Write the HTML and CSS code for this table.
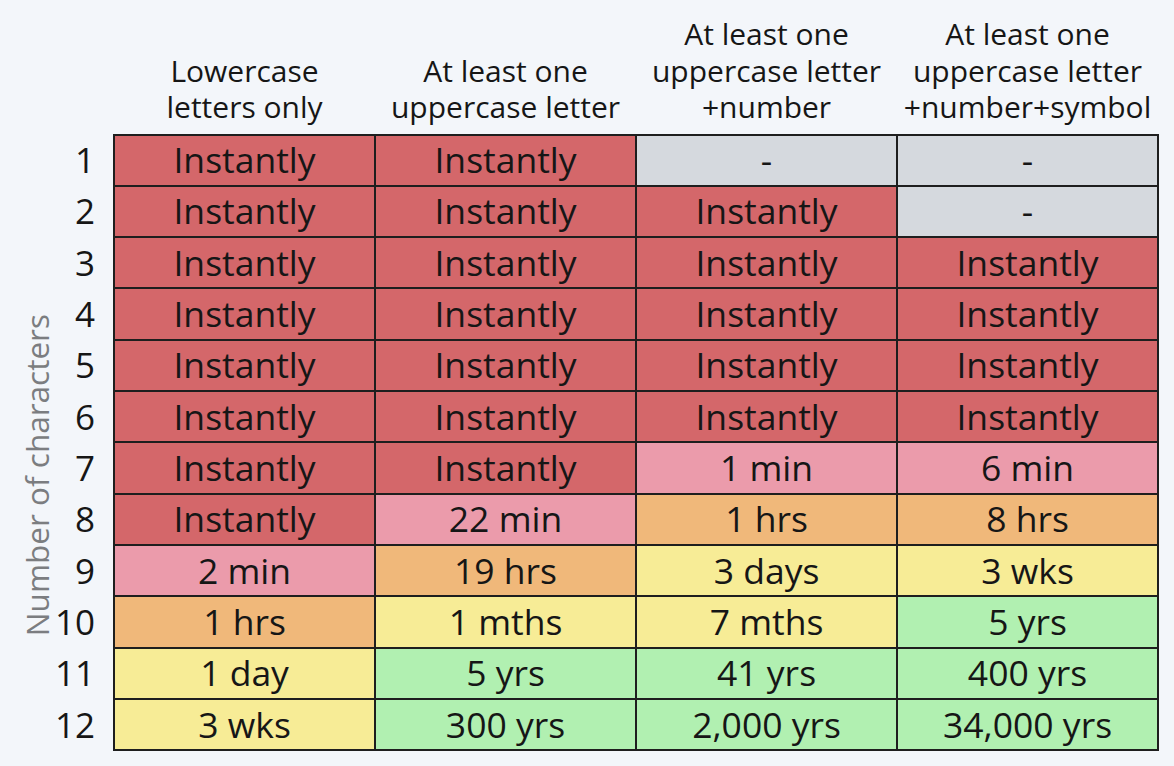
FILE: index.html
```html
<!DOCTYPE html>
<html>
<head>
<meta charset="utf-8">
<link rel="stylesheet" href="styles.css">
</head>
<body>
<div class="chart">
  <div class="axis"><span class="axis-text">Number of characters</span></div>
  <table class="grid">
    <thead>
      <tr>
        <th class="corner"></th>
        <th class="colhead">Lowercase<br>letters only</th>
        <th class="colhead">At least one<br>uppercase letter</th>
        <th class="colhead">At least one<br>uppercase letter<br>+number</th>
        <th class="colhead">At least one<br>uppercase letter<br>+number+symbol</th>
      </tr>
    </thead>
    <tbody>
      <tr><th class="num">1</th><td class="red">Instantly</td><td class="red">Instantly</td><td class="gray">-</td><td class="gray">-</td></tr>
      <tr><th class="num">2</th><td class="red">Instantly</td><td class="red">Instantly</td><td class="red">Instantly</td><td class="gray">-</td></tr>
      <tr><th class="num">3</th><td class="red">Instantly</td><td class="red">Instantly</td><td class="red">Instantly</td><td class="red">Instantly</td></tr>
      <tr><th class="num">4</th><td class="red">Instantly</td><td class="red">Instantly</td><td class="red">Instantly</td><td class="red">Instantly</td></tr>
      <tr><th class="num">5</th><td class="red">Instantly</td><td class="red">Instantly</td><td class="red">Instantly</td><td class="red">Instantly</td></tr>
      <tr><th class="num">6</th><td class="red">Instantly</td><td class="red">Instantly</td><td class="red">Instantly</td><td class="red">Instantly</td></tr>
      <tr><th class="num">7</th><td class="red">Instantly</td><td class="red">Instantly</td><td class="pink">1 min</td><td class="pink">6 min</td></tr>
      <tr><th class="num">8</th><td class="red">Instantly</td><td class="pink">22 min</td><td class="orange">1 hrs</td><td class="orange">8 hrs</td></tr>
      <tr><th class="num">9</th><td class="pink">2 min</td><td class="orange">19 hrs</td><td class="yellow">3 days</td><td class="yellow">3 wks</td></tr>
      <tr><th class="num">10</th><td class="orange">1 hrs</td><td class="yellow">1 mths</td><td class="yellow">7 mths</td><td class="green">5 yrs</td></tr>
      <tr><th class="num">11</th><td class="yellow">1 day</td><td class="green">5 yrs</td><td class="green">41 yrs</td><td class="green">400 yrs</td></tr>
      <tr><th class="num">12</th><td class="yellow">3 wks</td><td class="green">300 yrs</td><td class="green">2,000 yrs</td><td class="green">34,000 yrs</td></tr>
    </tbody>
  </table>
</div>
</body>
</html>
```
FILE: styles.css
```css
html, body {
  margin: 0;
  padding: 0;
  background: #f3f6fa;
}
body {
  font-family: "Open Sans", "Noto Sans", sans-serif;
  color: #161616;
  width: 1174px;
  height: 766px;
  overflow: hidden;
}
.chart {
  display: flex;
  align-items: flex-start;
  padding-top: 16px;
}
.axis {
  width: 36px;
  margin-left: 19px;
  align-self: flex-end;
  margin-bottom: 115px;
  display: flex;
  justify-content: center;
}
.axis-text {
  writing-mode: vertical-rl;
  transform: rotate(180deg);
  font-size: 31.5px;
  line-height: 36px;
  color: #7b7d80;
  white-space: nowrap;
}
.grid {
  border-collapse: collapse;
  table-layout: fixed;
}
.corner {
  width: 58px;
  padding: 0;
}
.colhead {
  width: 261px;
  font-weight: normal;
  font-size: 30px;
  line-height: 36.5px;
  vertical-align: bottom;
  text-align: center;
  padding: 0 0 8px 0;
  white-space: nowrap;
}
.num {
  font-weight: normal;
  font-size: 35px;
  text-align: right;
  padding: 0 18px 0 0;
  height: 49.33px;
  line-height: 40px;
}
td {
  border: 2px solid #1e1e1e;
  font-size: 35.5px;
  line-height: 40px;
  text-align: center;
  padding: 0 0 2px 0;
  height: 47.33px;
  white-space: nowrap;
}
.red { background: #d4676a; }
.pink { background: #eb9bab; }
.orange { background: #f0b87a; }
.yellow { background: #f7ec96; }
.green { background: #b1f0b1; }
.gray { background: #d5d9de; }
```
